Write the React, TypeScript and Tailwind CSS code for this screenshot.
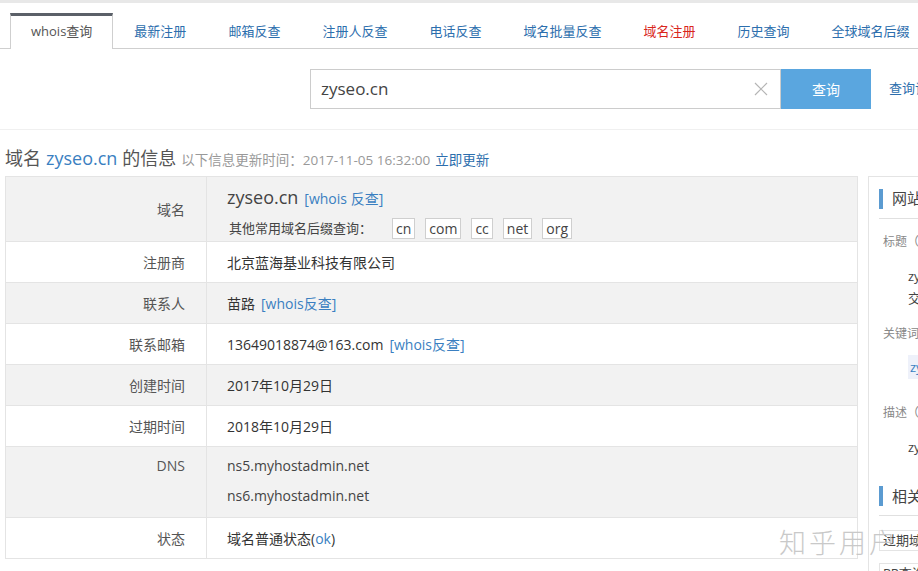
import React from "react";

const tabs = [
  { label: "whois查询", active: true },
  { label: "最新注册" },
  { label: "邮箱反查" },
  { label: "注册人反查" },
  { label: "电话反查" },
  { label: "域名批量反查" },
  { label: "域名注册", red: true },
  { label: "历史查询" },
  { label: "全球域名后缀" },
];

const suffixes = ["cn", "com", "cc", "net", "org"];

function Row({
  label,
  gray,
  h = "h-[41px]",
  top,
  children,
}: {
  label: string;
  gray?: boolean;
  h?: string;
  top?: boolean;
  children: React.ReactNode;
}) {
  return (
    <div
      className={`flex border-b border-[#e4e4e4] ${h} ${gray ? "bg-[#f2f2f2]" : "bg-white"}`}
    >
      <div
        className={`w-[201px] shrink-0 border-r border-[#e4e4e4] pr-[21px] text-right text-[14px] text-[#555] flex justify-end ${
          top ? "items-start pt-[4px] leading-[30px]" : "items-center"
        }`}
      >
        {label}
      </div>
      <div
        className={`flex-1 pl-[20px] text-[14px] text-[#333] flex whitespace-nowrap ${
          top ? "flex-col justify-start" : "items-center"
        }`}
      >
        {children}
      </div>
    </div>
  );
}

export default function App() {
  return (
    <div className="relative w-[918px] h-[571px] overflow-hidden bg-white font-['Open_Sans','Noto_Sans_CJK_SC',sans-serif]">
      {/* top strip */}
      <div className="h-[3px] bg-[#e8e8e8]" />

      {/* tabs */}
      <div className="mt-[10px] flex h-[36px] border-b border-[#cfcfcf] pl-[10px] whitespace-nowrap">
        {tabs.map((t) =>
          t.active ? (
            <div
              key={t.label}
              className="-mb-px flex h-[36px] shrink-0 items-center border-x border-t-[3px] border-x-[#cfcfcf] border-t-[#5b6068] bg-white px-[20px] pb-[1px] text-[13px] text-[#555]"
            >
              {t.label}
            </div>
          ) : (
            <div
              key={t.label}
              className={`flex shrink-0 items-center px-[21px] pt-[3px] text-[13px] ${
                t.red ? "text-[#d9261c]" : "text-[#2c6ead]"
              }`}
            >
              {t.label}
            </div>
          )
        )}
      </div>

      {/* search */}
      <div className="border-b border-[#f0f0f0] pb-[20px] pt-[20px]">
        <div className="flex items-center pl-[310px]">
          <div className="flex h-[40px] w-[471px] shrink-0 items-center border border-[#cccccc] pl-[10px] pr-[10px]">
            <span className="flex-1 text-[17px] text-[#444]">zyseo.cn</span>
            <svg width="14" height="14" viewBox="0 0 14 14" className="mr-[2px]">
              <path d="M1 1L13 13M13 1L1 13" stroke="#b5b5b5" strokeWidth="1.2" />
            </svg>
          </div>
          <div className="flex h-[40px] w-[90px] shrink-0 items-center justify-center bg-[#5aa6df] text-[14px] text-white">
            查询
          </div>
          <span className="ml-[18px] shrink-0 whitespace-nowrap text-[13px] text-[#2c6ead]">查询记录</span>
        </div>
      </div>

      {/* title */}
      <div className="mt-[15px] flex items-baseline pl-[5px] whitespace-nowrap">
        <span className="text-[18px] text-[#555]">域名 </span>
        <span className="ml-[5px] text-[18px] text-[#3a7fc1]">zyseo.cn</span>
        <span className="ml-[5px] text-[18px] text-[#555]">的信息</span>
        <span className="ml-[5px] text-[13.5px] text-[#999]">以下信息更新时间：2017-11-05 16:32:00</span>
        <span className="ml-[5px] text-[13.5px] text-[#2c6ead]">立即更新</span>
      </div>

      {/* main */}
      <div className="mt-[4px] flex items-start">
        <div className="ml-[5px] w-[853px] shrink-0 border-x border-t border-[#e4e4e4]">
          {/* domain row */}
          <div className="flex h-[65px] border-b border-[#e4e4e4] bg-[#f2f2f2]">
            <div className="flex w-[201px] shrink-0 items-center justify-end border-r border-[#e4e4e4] pr-[21px] text-[14px] text-[#555]">
              域名
            </div>
            <div className="flex flex-1 flex-col whitespace-nowrap pl-[20px] pt-[7px]">
              <div className="flex items-baseline">
                <span className="text-[18px] text-[#444]">zyseo.cn</span>
                <span className="ml-[6px] text-[14px] text-[#3a7fc1]">[whois 反查]</span>
              </div>
              <div className="mt-[7px] flex items-center pl-[2px]">
                <span className="text-[13px] text-[#444]">其他常用域名后缀查询：</span>
                <div className="ml-[20px] flex gap-[10px]">
                  {suffixes.map((s) => (
                    <span
                      key={s}
                      className="flex h-[21px] items-center border border-[#cfcfcf] bg-white px-[3px] text-[14px] text-[#444]"
                    >
                      {s}
                    </span>
                  ))}
                </div>
              </div>
            </div>
          </div>
          <Row label="注册商">北京蓝海基业科技有限公司</Row>
          <Row label="联系人" gray>
            苗路 <span className="ml-[6px] text-[#3a7fc1]">[whois反查]</span>
          </Row>
          <Row label="联系邮箱">
            13649018874@163.com <span className="ml-[6px] text-[#3a7fc1]">[whois反查]</span>
          </Row>
          <Row label="创建时间" gray>
            2017年10月29日
          </Row>
          <Row label="过期时间">2018年10月29日</Row>
          <Row label="DNS" gray h="h-[71px]" top>
            <div className="pt-[4px] leading-[30px] text-[#444]">ns5.myhostadmin.net</div>
            <div className="leading-[30px] text-[#444]">ns6.myhostadmin.net</div>
          </Row>
          <Row label="状态">
            域名普通状态(<span className="text-[#3a7fc1]">ok</span>)
          </Row>
        </div>

        {/* sidebar */}
        <div className="ml-[10px] w-[260px] shrink-0 border border-[#e4e4e4] pb-[20px] pl-[10px] whitespace-nowrap">
          <div className="flex h-[42px] items-center border-b border-[#e0e0e0] pt-[2px]">
            <span className="h-[20px] w-[4px] bg-[#5b9bd1]" />
            <span className="ml-[9px] text-[15px] text-[#444]">网站信息</span>
          </div>
          <div className="mt-[14px] pl-[4px] text-[12px] text-[#888]">标题（Title）</div>
          <div className="mt-[14px] pl-[29px] text-[13px] leading-[22px] text-[#444]">
            <div>zyseo.cn - 网站</div>
            <div>交流平台</div>
          </div>
          <div className="mt-[16px] pl-[4px] text-[12px] text-[#888]">关键词（KeyWords）</div>
          <div className="mt-[11px] pl-[29px]">
            <span className="bg-[#eef1fa] px-[2px] py-[3px] text-[13px] text-[#3a7fc1]">zyseo</span>
          </div>
          <div className="mt-[26px] pl-[4px] text-[12px] text-[#888]">描述（Description）</div>
          <div className="mt-[16px] pl-[29px] text-[13px] text-[#444]">zyseo.cn</div>
          <div className="mt-[20px] flex h-[38px] items-center border-b border-[#e0e0e0]">
            <span className="h-[20px] w-[4px] bg-[#5b9bd1]" />
            <span className="ml-[9px] text-[15px] text-[#444]">相关查询</span>
          </div>
          <div className="mt-[14px] flex flex-col gap-[12px] text-[13px] text-[#444]">
            <span className="w-fit border border-[#e4e4e4] px-[3px]">过期域名查询</span>
            <span className="w-fit border border-[#e4e4e4] px-[3px]">PR查询</span>
          </div>
        </div>
      </div>

      {/* watermark */}
      <div className="absolute left-[779px] top-[522px] text-[27px] tracking-[3px] text-[#c4c4c4] opacity-90 font-['Noto_Sans_CJK_SC',sans-serif] font-light">
        知乎用户
      </div>
    </div>
  );
}
